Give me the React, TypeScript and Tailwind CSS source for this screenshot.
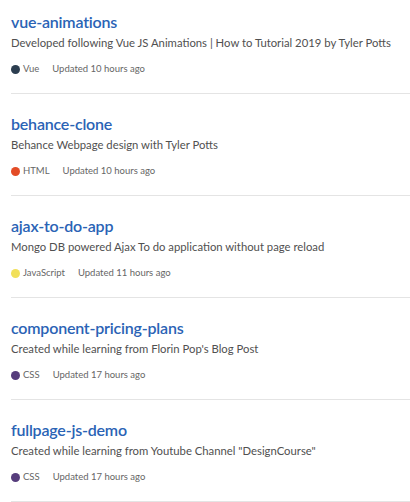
import React from "react";

const repos = [
  { name: "vue-animations", desc: "Developed following Vue JS Animations | How to Tutorial 2019 by Tyler Potts", lang: "Vue", color: "#2c3e50", updated: "Updated 10 hours ago" },
  { name: "behance-clone", desc: "Behance Webpage design with Tyler Potts", lang: "HTML", color: "#e34c26", updated: "Updated 10 hours ago" },
  { name: "ajax-to-do-app", desc: "Mongo DB powered Ajax To do application without page reload", lang: "JavaScript", color: "#f1e05a", updated: "Updated 11 hours ago" },
  { name: "component-pricing-plans", desc: "Created while learning from Florin Pop's Blog Post", lang: "CSS", color: "#563d7c", updated: "Updated 17 hours ago" },
  { name: "fullpage-js-demo", desc: "Created while learning from Youtube Channel \"DesignCourse\"", lang: "CSS", color: "#563d7c", updated: "Updated 17 hours ago" },
];

export default function App() {
  return (
    <div className="w-[410px] h-[502px] overflow-hidden bg-white pl-[11px]" style={{ fontFamily: 'Lato, "Noto Sans", sans-serif' }}>
      {repos.map((r, i) => (
        <div key={r.name} className={`${i === 0 ? "pt-[10px]" : "pt-[18px]"} pb-[16px] border-b border-[#e4e4e4]`}>
          <div className="text-[16px] leading-[24px] font-semibold tracking-[-0.2px] text-[#2a63b5]">{r.name}</div>
          <div className="text-[11.3px] leading-[18px] text-[#505050]">{r.desc}</div>
          <div className="mt-[9px] h-[16px] flex items-center text-[9.5px] text-[#666666]">
            <span className="w-[9px] h-[9px] rounded-full mr-[3px]" style={{ backgroundColor: r.color }} />
            <span>{r.lang}</span>
            <span className="ml-[13px]">{r.updated}</span>
          </div>
        </div>
      ))}
    </div>
  );
}
